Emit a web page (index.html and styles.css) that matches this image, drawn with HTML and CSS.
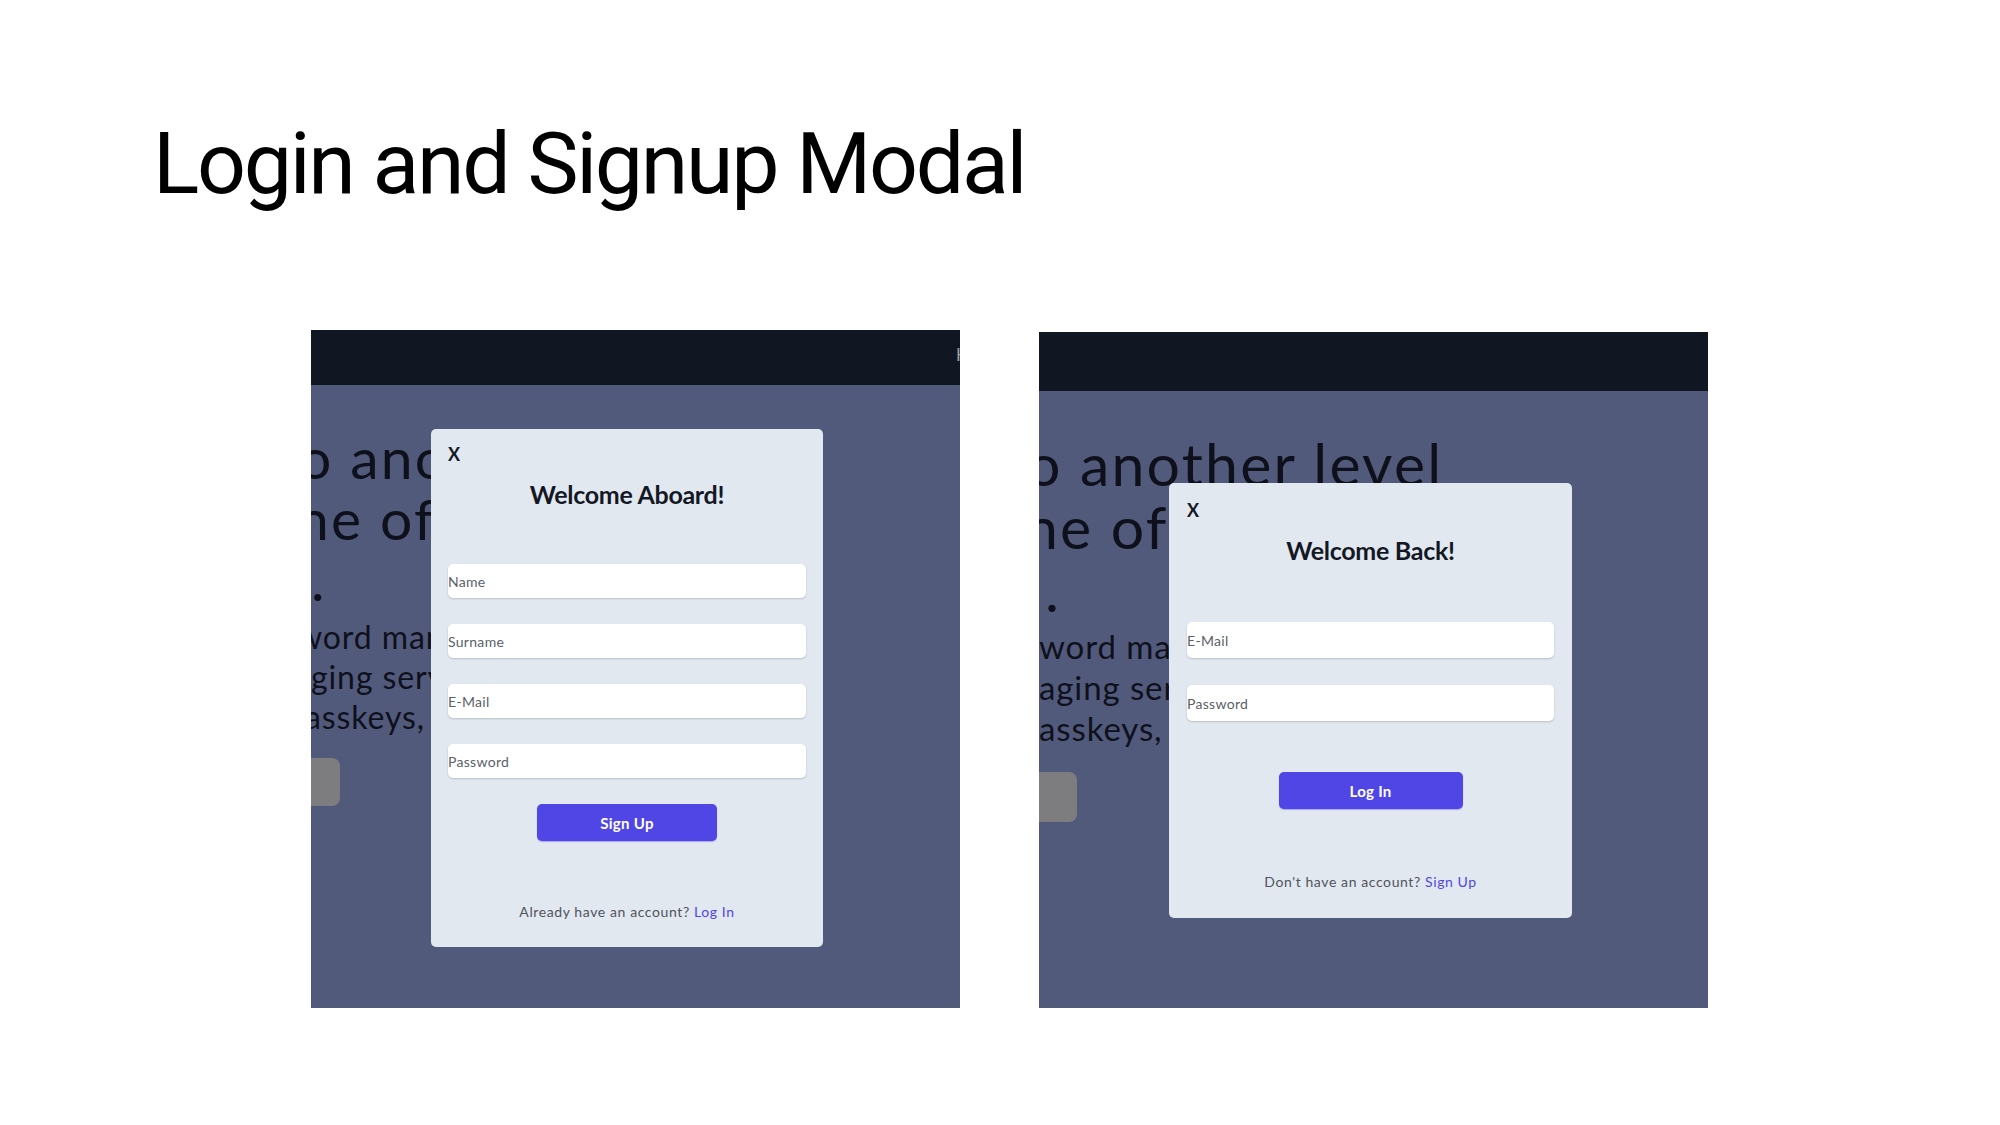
FILE: index.html
```html
<!DOCTYPE html>
<html lang="en">
<head>
<meta charset="utf-8">
<title>Login and Signup Modal</title>
<link rel="stylesheet" href="styles.css">
</head>
<body>
<main class="slide">
  <h1 class="title">Login and Signup Modal</h1>
  <div class="shots">
    <section class="shot shot-left">
      <div class="nav"><span class="nav-link">Home</span></div>
      <div class="hero">
        <div class="hero-title">
          <div class="line cut-a">o another level</div>
          <div class="line cut-b">ne of the best</div>
          <div class="line cut-c">.</div>
        </div>
        <div class="hero-text">
          <div class="line cut-d">word manager</div>
          <div class="line cut-e">ging service</div>
          <div class="line cut-f">asskeys, and more</div>
        </div>
        <div class="ghost-btn"></div>
      </div>
      <div class="modal modal-signup">
        <div class="close">X</div>
        <h2 class="modal-title">Welcome Aboard!</h2>
        <div class="fields">
          <input class="field" type="text" placeholder="Name">
          <input class="field" type="text" placeholder="Surname">
          <input class="field" type="text" placeholder="E-Mail">
          <input class="field" type="password" placeholder="Password">
        </div>
        <button class="primary">Sign Up</button>
        <p class="switch">Already have an account? <a class="switch-link">Log In</a></p>
      </div>
    </section>

    <section class="shot shot-right">
      <div class="nav"></div>
      <div class="hero">
        <div class="hero-title">
          <div class="line cut-a">o another level</div>
          <div class="line cut-b">ne of the best</div>
          <div class="line dot">.</div>
        </div>
        <div class="hero-text">
          <div class="line">word manager</div>
          <div class="line">aging service</div>
          <div class="line">asskeys, and more</div>
        </div>
        <div class="ghost-btn"></div>
      </div>
      <div class="modal modal-login">
        <div class="close">X</div>
        <h2 class="modal-title">Welcome Back!</h2>
        <div class="fields">
          <input class="field" type="text" placeholder="E-Mail">
          <input class="field" type="password" placeholder="Password">
        </div>
        <button class="primary">Log In</button>
        <p class="switch">Don't have an account? <a class="switch-link">Sign Up</a></p>
      </div>
    </section>
  </div>
</main>
</body>
</html>
```

FILE: styles.css
```css
* { box-sizing: border-box; }

html, body {
  margin: 0;
  padding: 0;
  background: #ffffff;
}

body {
  width: 2000px;
  height: 1125px;
  overflow: hidden;
}

.slide {
  display: flex;
  flex-direction: column;
  padding-top: 121px;
}

.title {
  margin: 0;
  padding-left: 153px;
  font-family: Roboto, "Liberation Sans", sans-serif;
  font-weight: 400;
  font-size: 86px;
  line-height: 86px;
  letter-spacing: -2.3px;
  color: #000000;
}

.shots {
  display: flex;
  align-items: flex-start;
  gap: 79px;
  padding-left: 311px;
  margin-top: 123px;
}

.shot {
  position: relative;
  display: flex;
  flex-direction: column;
  overflow: hidden;
  font-family: Lato, "Open Sans", sans-serif;
}

.shot-left {
  width: 649px;
  height: 678px;
}

.shot-right {
  width: 669px;
  height: 676px;
  margin-top: 2px;
}

.nav {
  display: flex;
  align-items: center;
  background: #111722;
  flex: none;
}

.shot-left .nav {
  height: 55px;
  padding-left: 645px;
}

.shot-right .nav {
  height: 59px;
}

.nav-link {
  white-space: nowrap;
  font-size: 17px;
  color: #9aa0ab;
  margin-top: -6px;
}

.hero {
  flex: 1;
  background: #525a7c;
  color: #0e111b;
  display: flex;
  flex-direction: column;
  align-items: flex-start;
}

.line {
  white-space: nowrap;
}

.hero-title,
.hero-text {
  font-weight: 400;
}

.shot-left .hero-title {
  font-size: 57px;
  line-height: 61px;
  letter-spacing: 2.2px;
  padding-top: 42px;
}

.shot-right .hero-title {
  font-size: 59px;
  line-height: 63px;
  letter-spacing: 2.2px;
  padding-top: 41px;
}

.shot-left .hero-text {
  font-size: 32px;
  line-height: 40px;
  letter-spacing: 0.9px;
  margin-top: 7px;
}

.shot-right .hero-text {
  font-size: 33px;
  line-height: 41px;
  letter-spacing: 0.9px;
  margin-top: 5px;
}

.cut-a { margin-left: -12px; }
.cut-b { margin-left: -14px; }
.cut-c { margin-left: 0; }
.cut-d { margin-left: -14px; }
.cut-e { margin-left: 0; }
.cut-f { margin-left: -6px; }
.dot { margin-left: 6px; }

.ghost-btn {
  background: #7d7d80;
  border-radius: 8px;
}

.shot-left .ghost-btn {
  width: 60px;
  height: 48px;
  margin-left: -31px;
  margin-top: 21px;
}

.shot-right .ghost-btn {
  width: 70px;
  height: 50px;
  margin-left: -32px;
  margin-top: 23px;
}

/* modal overlays the page */
.modal {
  position: absolute;
  display: flex;
  flex-direction: column;
  background: #e2e8f0;
  border-radius: 5px;
  color: #141824;
}

.modal-signup {
  left: 120px;
  top: 99px;
  width: 392px;
  padding: 16px 17px 27px;
}

.modal-login {
  left: 130px;
  top: 151px;
  width: 403px;
  padding: 18px 18px 28px;
}

.close {
  font-weight: 700;
  font-size: 18px;
  line-height: 18px;
  align-self: flex-start;
}

.modal-title {
  margin: 16px 0 0;
  text-align: center;
  font-weight: 700;
  font-size: 25px;
  line-height: 30px;
  letter-spacing: -0.3px;
  color: #141824;
}

.fields {
  display: flex;
  flex-direction: column;
}

.modal-signup .fields {
  margin-top: 55px;
  gap: 26px;
}

.modal-login .fields {
  margin-top: 57px;
  gap: 27px;
}

.field {
  display: block;
  width: 100%;
  border: none;
  outline: none;
  padding: 0;
  background: #ffffff;
  border-radius: 5px;
  box-shadow: 0 1px 2px rgba(0, 0, 0, 0.18);
  font-family: Lato, "Open Sans", sans-serif;
  font-size: 14px;
  letter-spacing: 0.3px;
  color: #333;
}

.field::placeholder {
  color: #5b5f68;
}

.modal-signup .field { height: 34px; }
.modal-login .field { height: 36px; }

.primary {
  align-self: center;
  border: none;
  background: #4f46e5;
  color: #ffffff;
  border-radius: 5px;
  font-family: Lato, "Open Sans", sans-serif;
  font-weight: 700;
  font-size: 15px;
  letter-spacing: 0.3px;
  height: 37px;
  padding: 0;
  box-shadow: 0 1px 1px rgba(79, 70, 229, 0.4);
}

.modal-signup .primary {
  width: 180px;
  margin-top: 26px;
}

.modal-login .primary {
  width: 184px;
  margin-top: 51px;
}

.switch {
  margin: 0;
  text-align: center;
  font-size: 14px;
  line-height: 16px;
  letter-spacing: 0.6px;
  color: #50535c;
}

.modal-signup .switch { margin-top: 63px; }
.modal-login .switch { margin-top: 65px; }

.switch-link {
  color: #4f46e5;
}
```
